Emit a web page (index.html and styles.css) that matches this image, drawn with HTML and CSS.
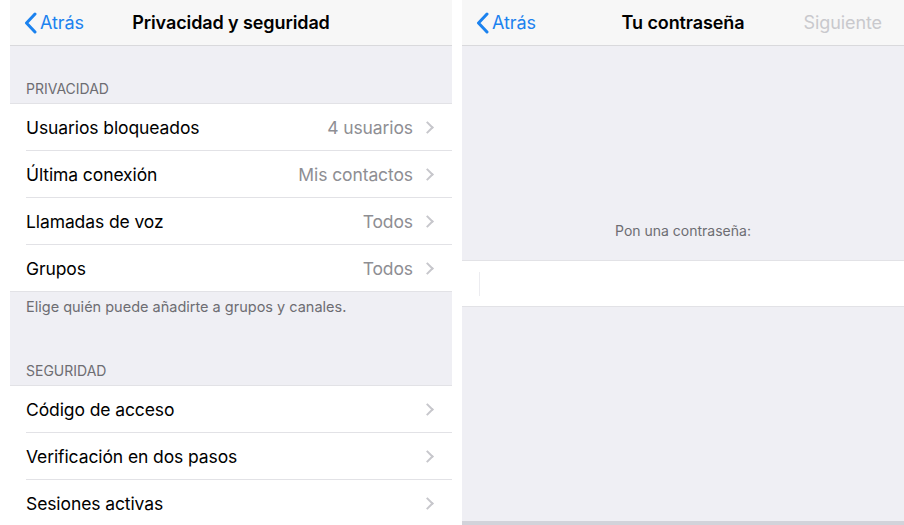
FILE: index.html
```html
<!DOCTYPE html>
<html lang="es">
<head>
    <meta charset="UTF-8">
    <meta name="viewport" content="width=device-width, initial-scale=1.0">
    <title>Privacidad y seguridad</title>
    <link rel="stylesheet" href="styles.css">
</head>
<body>
    <div class="page">
        <!-- Screen 1: privacy settings -->
        <div class="screen">
            <div class="navbar">
                <div class="back">
                    <svg class="back-icon" width="13" height="22" viewBox="0 0 13 22"><path d="M11 2 L2.5 11 L11 20" fill="none" stroke="currentColor" stroke-width="3" stroke-linecap="round" stroke-linejoin="round"/></svg>
                    <span>Atrás</span>
                </div>
                <div class="nav-title">Privacidad y seguridad</div>
                <div class="nav-right"></div>
            </div>

            <div class="content">
                <div class="section-header first">PRIVACIDAD</div>
                <div class="list">
                    <div class="row"><span class="label">Usuarios bloqueados</span><span class="value">4 usuarios</span><span class="chevron"></span></div>
                    <div class="row"><span class="label">Última conexión</span><span class="value">Mis contactos</span><span class="chevron"></span></div>
                    <div class="row"><span class="label">Llamadas de voz</span><span class="value">Todos</span><span class="chevron"></span></div>
                    <div class="row"><span class="label">Grupos</span><span class="value">Todos</span><span class="chevron"></span></div>
                </div>
                <div class="section-footer">Elige quién puede añadirte a grupos y canales.</div>

                <div class="section-header">SEGURIDAD</div>
                <div class="list">
                    <div class="row"><span class="label">Código de acceso</span><span class="value"></span><span class="chevron"></span></div>
                    <div class="row"><span class="label">Verificación en dos pasos</span><span class="value"></span><span class="chevron"></span></div>
                    <div class="row"><span class="label">Sesiones activas</span><span class="value"></span><span class="chevron"></span></div>
                </div>
            </div>
        </div>

        <!-- Screen 2: password -->
        <div class="screen">
            <div class="navbar">
                <div class="back">
                    <svg class="back-icon" width="13" height="22" viewBox="0 0 13 22"><path d="M11 2 L2.5 11 L11 20" fill="none" stroke="currentColor" stroke-width="3" stroke-linecap="round" stroke-linejoin="round"/></svg>
                    <span>Atrás</span>
                </div>
                <div class="nav-title">Tu contraseña</div>
                <div class="nav-right">Siguiente</div>
            </div>

            <div class="content password">
                <div class="prompt">Pon una contraseña:</div>
                <div class="input-row"><span class="cursor"></span></div>
                <div class="keyboard-edge"></div>
            </div>
        </div>
    </div>
</body>
</html>
```

FILE: styles.css
```css
body {
    margin: 0;
    padding: 0;
    background-color: #fff;
    font-family: Inter, "Open Sans", sans-serif;
    color: #000;
}

.page {
    display: flex;
    gap: 10px;
    padding-left: 10px;
    height: 525px;
    overflow: hidden;
}

.screen {
    width: 442px;
    display: flex;
    flex-direction: column;
}

/* Nav bar */
.navbar {
    height: 45px;
    flex-shrink: 0;
    display: grid;
    grid-template-columns: 1fr auto 1fr;
    align-items: center;
    background-color: #f7f7f7;
    border-bottom: 1px solid #d9d9dc;
}

.back {
    display: flex;
    align-items: center;
    gap: 3px;
    padding-left: 14px;
    color: #1b82ef;
    font-size: 18px;
    letter-spacing: -0.1px;
}

.back-icon {
    display: block;
}

.nav-title {
    font-size: 18px;
    font-weight: 600;
    letter-spacing: -0.1px;
}

.nav-right {
    text-align: right;
    padding-right: 22px;
    font-size: 18px;
    color: #c9c9cd;
    letter-spacing: -0.1px;
}

/* Content */
.content {
    flex: 1;
    background-color: #efeff4;
    display: flex;
    flex-direction: column;
}

.section-header {
    padding: 0 16px 6px;
    font-size: 14px;
    color: #6d6d72;
    line-height: 16px;
}

.section-header.first {
    padding-top: 35px;
}

.section-footer {
    padding: 7px 16px 48px;
    font-size: 14.5px;
    color: #6d6d72;
    line-height: 16px;
}

.list {
    background-color: #fff;
    border-top: 1px solid #e2e2e6;
    border-bottom: 1px solid #e2e2e6;
}

.row {
    height: 46px;
    display: flex;
    align-items: center;
    padding: 0 17px 0 16px;
    position: relative;
    font-size: 17.5px;
    letter-spacing: -0.1px;
}

.row + .row {
    border-top: 1px solid transparent;
}

.row + .row::before {
    content: "";
    position: absolute;
    top: -1px;
    left: 16px;
    right: 0;
    border-top: 1px solid #e2e2e6;
}

.label {
    flex: 1;
}

.value {
    color: #8e8e93;
    margin-right: 10px;
}

.chevron {
    width: 7px;
    height: 7px;
    border-top: 2px solid #c7c7cc;
    border-right: 2px solid #c7c7cc;
    transform: rotate(45deg);
    margin-right: 3px;
}

/* Password screen */
.password .prompt {
    margin-top: 177px;
    height: 16px;
    line-height: 16px;
    text-align: center;
    font-size: 14px;
    color: #6d6d72;
}

.input-row {
    margin-top: 21px;
    height: 45px;
    background-color: #fff;
    border-top: 1px solid #e2e2e6;
    border-bottom: 1px solid #e2e2e6;
    display: flex;
    align-items: center;
    padding-left: 17px;
}

.cursor {
    width: 1px;
    height: 24px;
    background-color: #ececf0;
}

.keyboard-edge {
    margin-top: auto;
    height: 4px;
    background-color: #d2d3da;
}
```
